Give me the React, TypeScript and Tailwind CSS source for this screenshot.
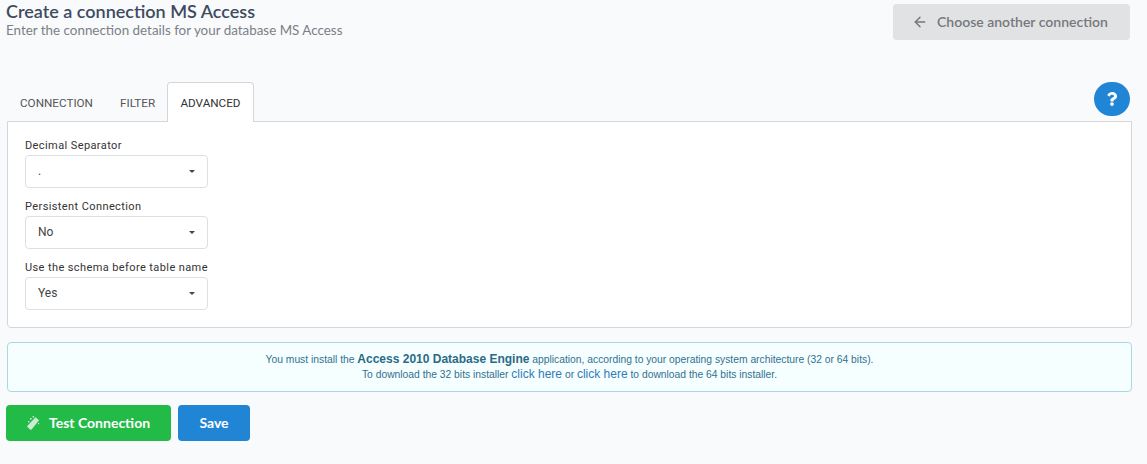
import { ArrowLeft } from 'lucide-react';
import { FaQuestion } from 'react-icons/fa';

const FIELDS = [
  { label: 'Decimal Separator', value: '.' },
  { label: 'Persistent Connection', value: 'No' },
  { label: 'Use the schema before table name', value: 'Yes' },
];

function SelectField({ label, value }: { label: string; value: string }) {
  return (
    <div className="mb-[9px]">
      <div className="h-[17px] pt-[1px] text-[11px] leading-[17px] tracking-[0.4px] text-[#333] font-['Roboto',sans-serif] whitespace-nowrap">
        {label}
      </div>
      <div className="mt-[2px] flex h-[33px] w-[183px] items-center justify-between rounded-[4px] border border-[#dcdfe3] bg-white pl-[12px] pr-[12px]">
        <span className="-mt-[1px] text-[12px] text-[#444] font-['Roboto',sans-serif]">{value}</span>
        <span className="h-0 w-0 border-x-[3px] border-t-[3px] border-x-transparent border-t-[#444]" />
      </div>
    </div>
  );
}

export default function App() {
  return (
    <div className="h-[464px] w-[1147px] overflow-hidden bg-[#f9fafc] font-['Lato',sans-serif]">
      {/* Header */}
      <div className="flex h-[82px] items-start justify-between pl-[6px] pr-[17px]">
        <div>
          <h1 className="text-[18px] leading-[22px] font-semibold text-[#3e4b5f]">Create a connection MS Access</h1>
          <p className="text-[13.4px] leading-[16px] text-[#7b7f86]">Enter the connection details for your database MS Access</p>
        </div>
        <button className="mt-[4px] flex h-[36px] w-[237px] items-center rounded-[4px] bg-[#e1e2e4] pb-[1px] pl-[19px] text-[14px] font-semibold text-[#76787b]">
          <ArrowLeft size={16} strokeWidth={2.25} className="mr-[9px]" />
          Choose another connection
        </button>
      </div>

      {/* Tabs */}
      <div className="relative z-10 flex h-[40px] items-start justify-between pl-[6px] pr-[17px]">
        <div className="flex h-[40px] text-[11.7px] font-['Roboto',sans-serif]">
          <div className="flex w-[100px] items-center pl-[14px] pt-[4px] text-[#555]">CONNECTION</div>
          <div className="flex w-[61px] items-center pl-[14px] pt-[4px] text-[#555]">FILTER</div>
          <div className="flex h-[40px] w-[87px] items-center justify-center rounded-t-[4px] border border-b-0 border-[#d4d6d9] bg-white pt-[2px] text-[#333]">
            ADVANCED
          </div>
        </div>
        <button className="flex h-[34px] w-[36px] items-center justify-center rounded-full bg-[#2185d5] text-white">
          <FaQuestion size={14} />
        </button>
      </div>

      {/* Panel */}
      <div className="ml-[7px] -mt-px h-[207px] w-[1125px] rounded-b-[4px] border border-[#d4d6d9] bg-white pl-[17px] pt-[14px]">
        {FIELDS.map((f) => (
          <SelectField key={f.label} label={f.label} value={f.value} />
        ))}
      </div>

      {/* Notice */}
      <div className="ml-[7px] mt-[14px] flex h-[50px] w-[1125px] flex-col items-center justify-center rounded-[4px] border border-[#a9d8e2] bg-[#f6ffff] font-['Liberation_Sans',sans-serif] text-[10.3px] leading-[15px] text-[#31708f]">
        <div>
          You must install the <b className="text-[12px] text-[#2b6a87]">Access 2010 Database Engine</b> application, according to your operating system architecture (32 or 64 bits).
        </div>
        <div>
          To download the 32 bits installer <span className="text-[12px] text-[#337ab7]">click here</span> or <span className="text-[12px] text-[#337ab7]">click here</span> to download the 64 bits installer.
        </div>
      </div>

      {/* Actions */}
      <div className="mt-[13px] flex gap-[7px] pl-[6px]">
        <button className="flex h-[36px] w-[165px] items-center rounded-[4px] bg-[#22bb47] pb-[1px] pl-[19px] text-[14px] font-bold text-white">
          <svg viewBox="0 0 16 16" width="16" height="16" className="mr-[8px] text-[#c9ecd2]" fill="currentColor">
            <path d="M10.6 2.2 14 5.2 6.6 14.4a1 1 0 0 1-1.4.1L2.6 12.2a1 1 0 0 1-.1-1.4z" />
            <rect x="5" y="3" width="1.6" height="1.6" />
            <rect x="7.6" y="1" width="1.6" height="1.6" />
            <rect x="3" y="6" width="1.4" height="1.4" />
            <rect x="13" y="8" width="1.2" height="1.2" />
          </svg>
          Test Connection
        </button>
        <button className="flex h-[36px] w-[72px] items-center justify-center rounded-[4px] bg-[#2185d5] pb-[1px] text-[14px] font-bold text-white">
          Save
        </button>
      </div>
    </div>
  );
}
